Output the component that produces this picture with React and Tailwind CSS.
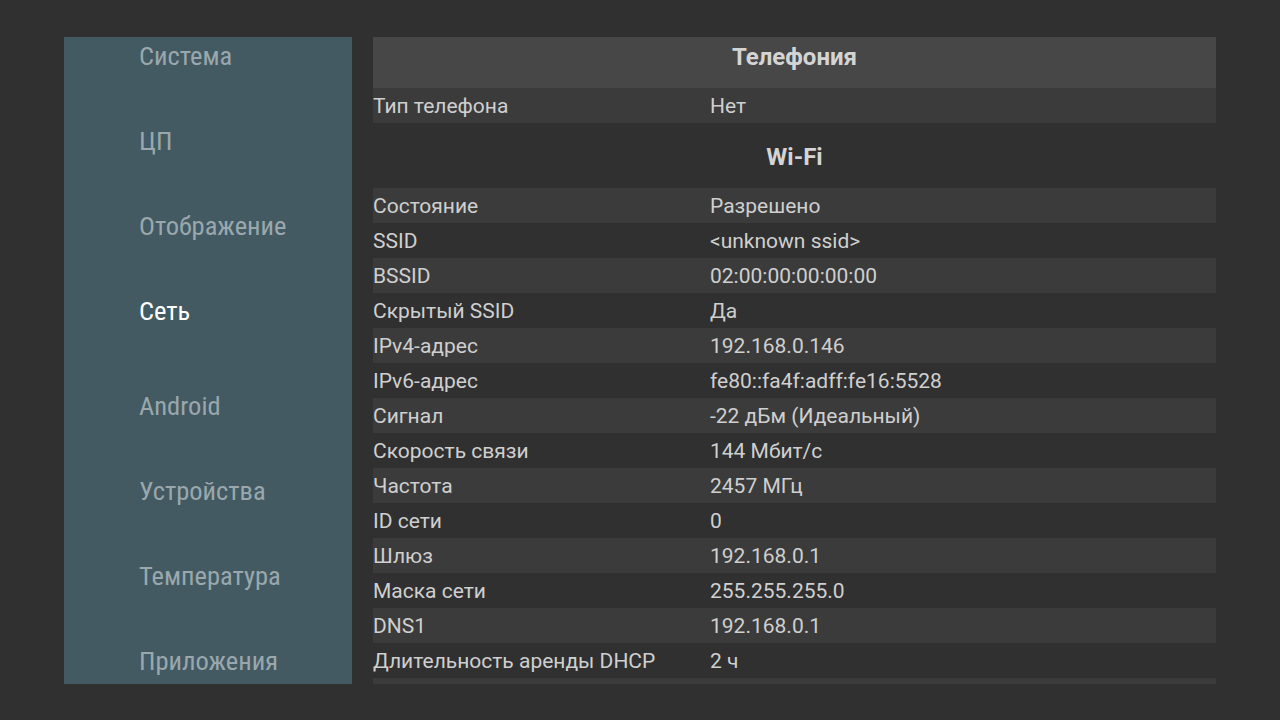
const menu = [
  'Система',
  'ЦП',
  'Отображение',
  'Сеть',
  'Android',
  'Устройства',
  'Температура',
  'Приложения',
];

const sections = [
  {
    title: 'Телефония',
    filled: true,
    rows: [['Тип телефона', 'Нет']],
  },
  {
    title: 'Wi-Fi',
    filled: false,
    rows: [
      ['Состояние', 'Разрешено'],
      ['SSID', '<unknown ssid>'],
      ['BSSID', '02:00:00:00:00:00'],
      ['Скрытый SSID', 'Да'],
      ['IPv4-адрес', '192.168.0.146'],
      ['IPv6-адрес', 'fe80::fa4f:adff:fe16:5528'],
      ['Сигнал', '-22 дБм (Идеальный)'],
      ['Скорость связи', '144 Мбит/с'],
      ['Частота', '2457 МГц'],
      ['ID сети', '0'],
      ['Шлюз', '192.168.0.1'],
      ['Маска сети', '255.255.255.0'],
      ['DNS1', '192.168.0.1'],
      ['Длительность аренды DHCP', '2 ч'],
      // next row only peeks out under the scroll edge
      ['', ''],
    ],
  },
];

const selected = 'Сеть';

export default function App() {
  return (
    <div className="w-[1280px] h-[720px] bg-[#303030] flex px-[64px] pt-[37px] pb-[36px] gap-[21px] overflow-hidden">
      {/* left menu */}
      <div
        className="w-[288px] shrink-0 bg-[#435a63] flex flex-col pl-[75px] overflow-hidden"
        style={{ fontFamily: '"Roboto Condensed", Roboto, sans-serif', fontStretch: 'condensed' }}
      >
        {menu.map((item) => (
          <div
            key={item}
            className={`shrink-0 flex items-start text-[26.5px] leading-[38px] ${
              item === selected ? 'text-white h-[95px]' : 'text-[#9aa8ad] h-[85px]'
            }`}
          >
            {item}
          </div>
        ))}
      </div>

      {/* details */}
      <div
        className="w-[843px] shrink-0 flex flex-col overflow-hidden"
        style={{ fontFamily: 'Roboto, "Noto Sans", sans-serif' }}
      >
        {sections.map((s, si) => (
          <div key={s.title} className={`flex flex-col ${si > 0 ? 'mt-[14px]' : ''}`}>
            <div
              className={`h-[51px] shrink-0 text-center font-bold text-[24px] leading-[41px] text-[#d4d4d4] ${
                s.filled ? 'bg-[#474747]' : ''
              }`}
            >
              {s.title}
            </div>
            {s.rows.map(([k, v], ri) => (
              <div
                key={ri}
                className={`h-[35px] shrink-0 flex items-center pt-[3px] text-[21px] text-[#cfcfcf] ${
                  ri % 2 === 0 ? 'bg-[#3b3b3b]' : ''
                }`}
              >
                <div className="w-[337px] shrink-0">{k}</div>
                <div>{v}</div>
              </div>
            ))}
          </div>
        ))}
      </div>
    </div>
  );
}
